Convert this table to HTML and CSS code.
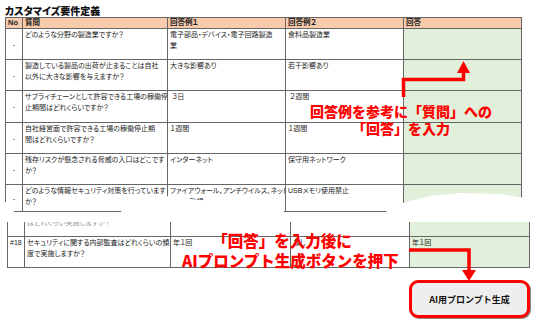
FILE: index.html
```html
<!DOCTYPE html>
<html lang="ja">
<head>
<meta charset="utf-8">
<link rel="stylesheet" href="styles.css">
</head>
<body>
<div class="title">カスタマイズ要件定義</div>

<div class="sheet upper">
  <div class="c h">No</div>
  <div class="c h">質問</div>
  <div class="c h">回答例１</div>
  <div class="c h">回答例２</div>
  <div class="c h">回答</div>

  <div class="c no">-</div>
  <div class="c">どのような分野の製造業ですか？</div>
  <div class="c">電子部品・デバイス・電子回路製造<br>業</div>
  <div class="c">食料品製造業</div>
  <div class="c ans"></div>

  <div class="c no">-</div>
  <div class="c">製造している製品の出荷が止まることは自社<br>以外に大きな影響を与えますか？</div>
  <div class="c">大きな影響あり</div>
  <div class="c">若干影響あり</div>
  <div class="c ans"></div>

  <div class="c no">-</div>
  <div class="c">サプライチェーンとして許容できる工場の稼働停<br>止期間はどれくらいですか？</div>
  <div class="c">&nbsp;３日</div>
  <div class="c">&nbsp;２週間</div>
  <div class="c ans"></div>

  <div class="c no">-</div>
  <div class="c">自社経営面で許容できる工場の稼働停止期<br>間はどれくらいですか？</div>
  <div class="c">１週間</div>
  <div class="c">１週間</div>
  <div class="c ans"></div>

  <div class="c no">-</div>
  <div class="c">残存リスクが懸念される脅威の入口はどこです<br>か？</div>
  <div class="c">インターネット</div>
  <div class="c">保守用ネットワーク</div>
  <div class="c ans"></div>

  <div class="c no">-</div>
  <div class="c">どのような情報セキュリティ対策を行っています<br>か？</div>
  <div class="c">ファイアウォール、アンチウイルス、ネット<br>ワーク監視</div>
  <div class="c">USBメモリ使用禁止</div>
  <div class="c ans"></div>
</div>

<div class="sheet lower">
  <div class="c"></div>
  <div class="c clip"><span class="faint">はどれぐらい実施しますか？</span></div>
  <div class="c"></div>
  <div class="c"></div>
  <div class="c ans"></div>

  <div class="c">#18</div>
  <div class="c">セキュリティに関する内部監査はどれくらいの頻<br>度で実施しますか？</div>
  <div class="c">年１回</div>
  <div class="c">なし</div>
  <div class="c ans">年１回</div>
</div>

<div class="actions">
  <div class="btn">AI用プロンプト生成</div>
</div>

<svg class="overlay" width="536" height="324" viewBox="0 0 536 324">
  <path fill="#fff" d="M0,202 L13,202 L14,212 L121,212 L124,205 L150,199 L166,196 L200,200 L240,202 L282,203 L284,212 L386,212 L390,206 L403,203 L430,196 L460,193 L500,194 L536,200 L536,222 L0,222 Z"/>
  <polyline points="403.5,97 403.5,79.5 463.5,79.5 463.5,72" fill="none" stroke="#ff0000" stroke-width="3.5" stroke-linejoin="miter"/>
  <polygon points="457,73 470,73 463.5,61" fill="#ff0000"/>
  <polyline points="409,250 469,250 469,271" fill="none" stroke="#ff0000" stroke-width="3.5" stroke-linejoin="miter"/>
  <polygon points="462,270 476,270 469,281" fill="#ff0000"/>
</svg>

<div class="callout c1">回答例を参考に「質問」への<br>「回答」を入力</div>
<div class="callout c2">「回答」を入力後に<br>AIプロンプト生成ボタンを押下</div>
</body>
</html>
```

FILE: styles.css
```css
html, body {
  margin: 0;
  padding: 0;
  background: #ffffff;
}
body {
  position: relative;
  width: 536px;
  height: 324px;
  overflow: hidden;
  font-family: "Liberation Sans", "Noto Sans CJK JP", sans-serif;
  color: #1c1c1c;
}
.title {
  box-sizing: border-box;
  height: 17px;
  padding: 4px 0 0 5px;
  font-family: "Noto Sans CJK JP", sans-serif;
  font-size: 10px;
  line-height: 13px;
  font-weight: 900;
  color: #111;
  font-feature-settings: "palt";
}
.sheet {
  display: grid;
  width: max-content;
  border-left: 1px solid #666;
  border-top: 1px solid #666;
}
.upper {
  margin-left: 5px;
  grid-template-columns: 17px 145px 118px 118px 118px;
  grid-template-rows: 11px 31px 31px 32px 31px 31px 27px;
}
.lower {
  margin-left: 7px;
  margin-top: 10px;
  border-top: none;
  grid-template-columns: 17px 146px 120px 119px 120px;
  grid-template-rows: 15px 31px;
}
.c {
  box-sizing: border-box;
  border-right: 1px solid #666;
  border-bottom: 1px solid #666;
  padding: 0 1px 0 2px;
  overflow: hidden;
  white-space: nowrap;
  font-size: 7px;
  line-height: 11px;
  font-feature-settings: "palt";
}
.h {
  background: #f8cbad;
  font-weight: bold;
  font-size: 7.5px;
  line-height: 10px;
  color: #222;
}
.no {
  display: flex;
  align-items: center;
  justify-content: center;
  padding: 0;
}
.ans {
  background: #e2efda;
}
.clip .faint {
  display: block;
  margin-top: -5px;
  color: #9a9a9a;
}
.actions {
  display: flex;
  margin-top: 12px;
  padding-left: 409px;
}
.btn {
  box-sizing: border-box;
  width: 121px;
  height: 38px;
  border: 3px solid #ff0000;
  border-radius: 9px;
  background: #eeeeee;
  box-shadow: 1px 1px 0 #8a8a8a;
  display: flex;
  align-items: center;
  justify-content: center;
  font-family: "Noto Sans CJK JP", sans-serif;
  font-size: 9px;
  font-weight: bold;
  color: #111;
}
.overlay {
  position: absolute;
  left: 0;
  top: 0;
  pointer-events: none;
}
.callout {
  position: absolute;
  width: 200px;
  text-align: center;
  white-space: nowrap;
  color: #ff0000;
  font-family: "Noto Sans CJK JP", sans-serif;
  font-weight: 900;
}
.c1 {
  left: 301px;
  top: 103px;
  font-size: 14px;
  line-height: 17px;
}
.c2 {
  left: 182px;
  top: 230px;
  font-size: 15.5px;
  line-height: 20px;
}
```
